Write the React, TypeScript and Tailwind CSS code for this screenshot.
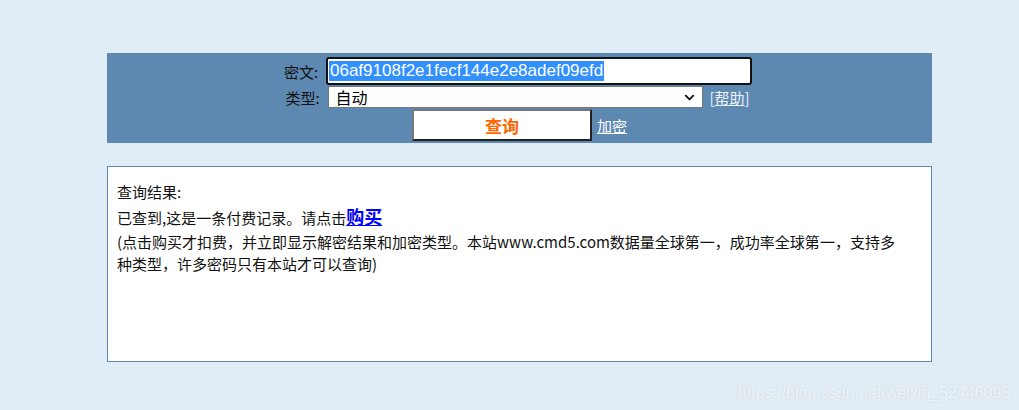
import { ChevronDown } from "lucide-react";

const cjk = { fontFamily: '"Noto Sans CJK SC", "Noto Sans", sans-serif' };
const arial = { fontFamily: '"Liberation Sans", Arial, sans-serif' };

export default function App() {
  return (
    <div className="relative w-[1019px] h-[410px] bg-[#e1edf6] pl-[107px] pt-[53px] overflow-hidden" style={cjk}>
      {/* search panel */}
      <div className="w-[825px] h-[90px] bg-[#5c88b2] pt-[4px] flex flex-col items-center gap-[1px]">
        <div className="flex items-center ml-[-3px]">
          <span className="text-[15px] text-[#111] w-[37px] mr-[5px] leading-none">密文:</span>
          <div className="w-[426px] h-[28px] border-2 border-[#111] rounded-[3px] bg-white flex items-center px-[1px]">
            <span className="bg-[#3390ff] text-white text-[17px] leading-[20px] px-[1px]" style={arial}>
              06af9108f2e1fecf144e2e8adef09efd
            </span>
          </div>
        </div>
        <div className="flex items-center ml-[-4px]">
          <span className="text-[15px] text-[#111] w-[37px] mr-[6px] leading-none">类型:</span>
          <div className="w-[375px] h-[22px] border border-[#767676] bg-white flex items-center justify-between pl-[6px] pr-[5px]">
            <span className="text-[16px] leading-none text-black">自动</span>
            <ChevronDown size={15} strokeWidth={3} className="text-[#111]" />
          </div>
          <span className="ml-[6px] text-[15px] text-[#eef3fa] leading-none">
            [<span className="underline">帮助</span>]
          </span>
        </div>
        <div className="flex items-center">
          <button className="w-[180px] h-[32px] bg-white border-2 border-t-[#777] border-l-[#777] border-b-[#222] border-r-[#222] text-[#ff6600] text-[17px] font-bold leading-none">
            查询
          </button>
          <a className="ml-[5px] text-[15px] text-white underline leading-none">加密</a>
        </div>
      </div>

      {/* result box */}
      <div className="mt-[23px] w-[825px] h-[196px] bg-white border border-[#5b88b2] pl-[9px] pt-[14px] text-[15px] text-[#111]">
        <div className="leading-[22px]">查询结果:</div>
        <div className="leading-[26px]">
          已查到,这是一条付费记录。请点击<a className="text-[#0000ff] font-bold text-[18px] underline">购买</a>
        </div>
        <div className="leading-[22px] whitespace-nowrap">
          (点击购买才扣费，并立即显示解密结果和加密类型。本站www.cmd5.com数据量全球第一，成功率全球第一，支持多
        </div>
        <div className="leading-[22px]">种类型，许多密码只有本站才可以查询)</div>
      </div>

      {/* watermark */}
      <div
        className="absolute left-[738px] top-[381px] text-[16px] text-white/70 [text-shadow:0_0_2px_rgba(0,0,0,0.12)]"
        style={arial}
      >
        https://blog.csdn.net/weixin_52446095
      </div>
    </div>
  );
}
